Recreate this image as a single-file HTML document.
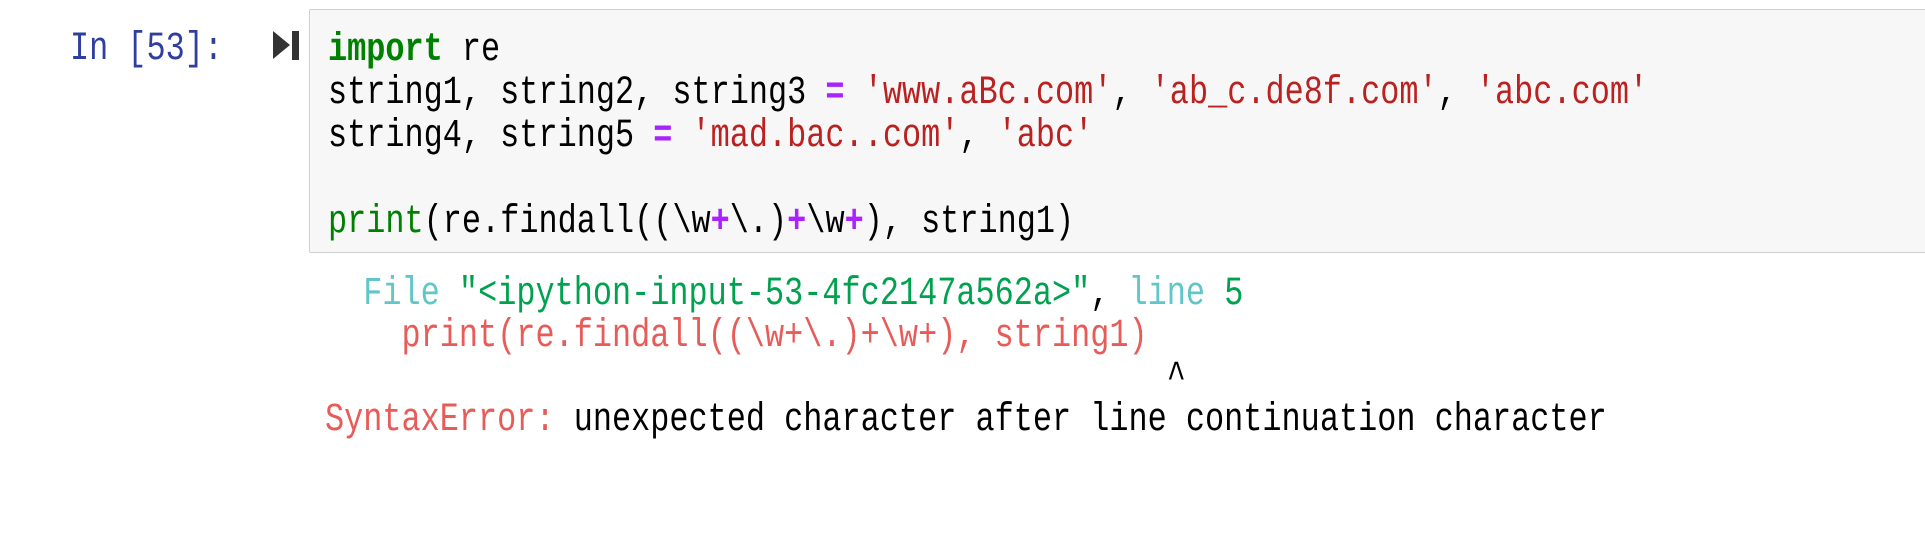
<!DOCTYPE html>
<html><head><meta charset="utf-8"><style>
html,body{margin:0;padding:0;background:#fff;width:1925px;height:545px;overflow:hidden;position:relative}
.m{font-family:"Liberation Mono","DejaVu Sans Mono",monospace;font-size:40px;line-height:43px;white-space:pre;position:absolute;margin:0;transform:scaleX(0.797);transform-origin:0 0}
.box{position:absolute;left:309px;top:9px;width:1640px;height:242px;background:#f7f7f7;border:1px solid #cfcfcf;border-radius:2px}
.k{color:#008000;font-weight:bold}.b{color:#008000}.o{color:#aa22ff;font-weight:bold}.s{color:#ba2121}
.t{color:#60c6c8}.g{color:#00a250}.r{color:#e75c58}
</style></head><body>
<div class="m" style="left:70px;top:28px;color:#303f9f">In [53]:</div>
<svg style="position:absolute;left:272px;top:30px" width="30" height="32"><polygon points="1,1 18,15 1,29" fill="#333"/><rect x="20" y="1" width="7" height="29" fill="#333"/></svg>
<div class="box"></div>
<div class="m" style="left:328px;top:29px;color:#000"><span class="k">import</span> re
string1, string2, string3 <span class="o">=</span> <span class="s">'www.aBc.com'</span>, <span class="s">'ab_c.de8f.com'</span>, <span class="s">'abc.com'</span>
string4, string5 <span class="o">=</span> <span class="s">'mad.bac..com'</span>, <span class="s">'abc'</span>

<span class="b">print</span>(re.findall((\w<span class="o">+</span>\.)<span class="o">+</span>\w<span class="o">+</span>), string1)</div>
<div class="m" style="left:325px;top:274px;line-height:42px;color:#000">  <span class="t">File</span> <span class="g">"&lt;ipython-input-53-4fc2147a562a&gt;"</span>, <span class="t">line</span> <span class="g">5</span>
    <span class="r">print(re.findall((\w+\.)+\w+), string1)</span>
                                            ^
<span class="r">SyntaxError:</span> unexpected character after line continuation character</div>
</body></html>
